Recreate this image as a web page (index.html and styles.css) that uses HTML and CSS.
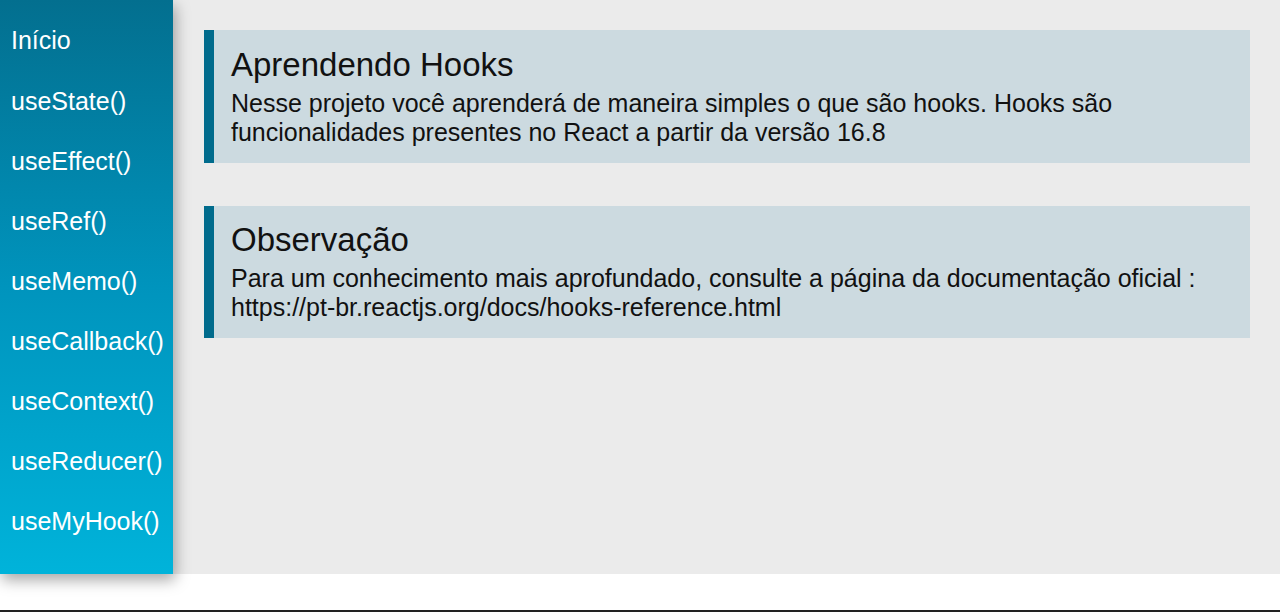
FILE: index.html
```html
<!DOCTYPE html>
<html lang="pt-BR">
<head>
<meta charset="utf-8">
<title>Hooks</title>
<link rel="stylesheet" href="styles.css">
</head>
<body>
<div class="app">
  <nav class="sidebar">
    <a class="nav-item" href="#">Início</a>
    <a class="nav-item" href="#">useState()</a>
    <a class="nav-item" href="#">useEffect()</a>
    <a class="nav-item" href="#">useRef()</a>
    <a class="nav-item" href="#">useMemo()</a>
    <a class="nav-item" href="#">useCallback()</a>
    <a class="nav-item" href="#">useContext()</a>
    <a class="nav-item" href="#">useReducer()</a>
    <a class="nav-item" href="#">useMyHook()</a>
  </nav>
  <main class="content">
    <section class="card">
      <h2 class="card-title">Aprendendo Hooks</h2>
      <p class="card-text">Nesse projeto você aprenderá de maneira simples o que são hooks. Hooks são funcionalidades presentes no React a partir da versão 16.8</p>
    </section>
    <section class="card">
      <h2 class="card-title">Observação</h2>
      <p class="card-text">Para um conhecimento mais aprofundado, consulte a página da documentação oficial : https://pt-br.reactjs.org/docs/hooks-reference.html</p>
    </section>
  </main>
</div>
<div class="bottom-bar"></div>
</body>
</html>
```
FILE: styles.css
```css
* { box-sizing: border-box; }
html, body { margin: 0; padding: 0; }
body {
  background: #ffffff;
  font-family: "Liberation Sans", Arial, sans-serif;
  height: 612px;
  display: flex;
  flex-direction: column;
  overflow: hidden;
}
.app {
  display: flex;
  height: 574px;
  background: #ebebeb;
}
.sidebar {
  width: 173px;
  flex-shrink: 0;
  display: flex;
  flex-direction: column;
  padding-top: 10px;
  background: linear-gradient(to bottom, #036f8f 0%, #0094bd 50%, #00b3da 100%);
  box-shadow: 2px 6px 14px rgba(0, 0, 0, 0.35);
  position: relative;
  z-index: 1;
}
.nav-item {
  display: block;
  height: 60px;
  line-height: 60px;
  padding-left: 11px;
  margin-top: -20px;
  margin-bottom: 20px;
  color: #ffffff;
  text-decoration: none;
  font-size: 25px;
  white-space: nowrap;
}
.nav-item:first-child { margin-top: 0; }
.nav-item:nth-child(2) { margin-top: -19px; }
.content {
  flex: 1;
  padding: 30px 30px 0 31px;
  display: flex;
  flex-direction: column;
  gap: 43px;
}
.card {
  background: #ccdae0;
  border-left: 10px solid #006b8c;
  padding: 16px 17px 0 17px;
  height: 133px;
}
.card + .card { height: 132px; padding-top: 15px; }
.card-title {
  margin: 0;
  font-size: 33px;
  font-weight: normal;
  line-height: 38px;
  color: #111;
}
.card-text {
  margin: 5px 0 0 0;
  font-size: 25px;
  line-height: 29px;
  color: #111;
}
.bottom-bar {
  margin-top: auto;
  height: 2px;
  background: #222222;
}
```
